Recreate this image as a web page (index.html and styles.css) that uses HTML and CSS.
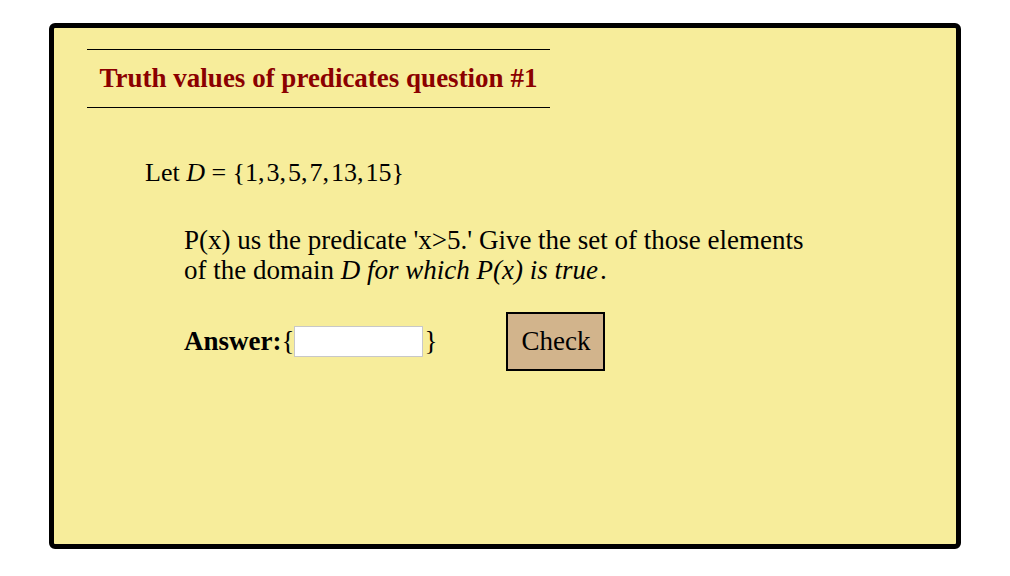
FILE: index.html
```html
<!DOCTYPE html>
<html>
<head>
<meta charset="utf-8">
<link rel="stylesheet" href="styles.css">
</head>
<body>
<div class="card">
  <div class="title">Truth values of predicates question #1</div>
  <div class="let">Let <span class="math"><i>D</i> = {1,<span class="th"></span>3,<span class="th"></span>5,<span class="th"></span>7,<span class="th"></span>13,<span class="th"></span>15}</span></div>
  <div class="question">
    <p class="prompt">P(x) us the predicate 'x&gt;5.' Give the set of those elements<br>of the domain <i>D for which P(x) is true</i><span class="th"></span>.</p>
    <div class="answer-row">
      <span class="answer-label"><b>Answer:</b>{<input type="text" class="answer-input">}</span>
      <button class="check">Check</button>
    </div>
  </div>
</div>
</body>
</html>
```

FILE: styles.css
```css
html, body {
  margin: 0;
  padding: 0;
  background: #ffffff;
}
body {
  font-family: "Liberation Serif", "Times New Roman", serif;
  color: #000;
  padding-top: 23px;
}
.card {
  width: 869px;
  height: 495px;
  margin: 0 auto;
  border: 5px solid #000;
  border-radius: 6px;
  background: #f7ed9b;
  padding: 21px 0 0 33px;
  box-sizing: content-box;
}
.title {
  width: 463px;
  height: 57px;
  border-top: 1px solid #000;
  border-bottom: 1px solid #000;
  display: flex;
  align-items: center;
  justify-content: center;
  font-size: 27px;
  font-weight: bold;
  color: #8b0000;
}
.let {
  font-size: 26px;
  margin: 51px 0 0 58px;
  line-height: 28px;
}
.th {
  display: inline-block;
  width: 2px;
}
.question {
  margin-left: 97px;
}
.prompt {
  font-size: 27px;
  line-height: 30px;
  margin: 38px 0 0 0;
}
.answer-row {
  display: flex;
  align-items: center;
  margin-top: 27px;
  font-size: 27px;
}
.answer-label {
  display: flex;
  align-items: center;
}
.answer-input {
  width: 127px;
  height: 29px;
  border: 1px solid #c8c8c8;
  background: #fff;
  margin: 0 1px 0 0;
  padding: 0;
  box-sizing: content-box;
  font-size: 16px;
}
.check {
  margin-left: 69px;
  width: 99px;
  height: 59px;
  background: #d2b48c;
  border: 2px solid #000;
  font-family: "Liberation Serif", "Times New Roman", serif;
  font-size: 27px;
  color: #000;
  padding: 0;
}
```
